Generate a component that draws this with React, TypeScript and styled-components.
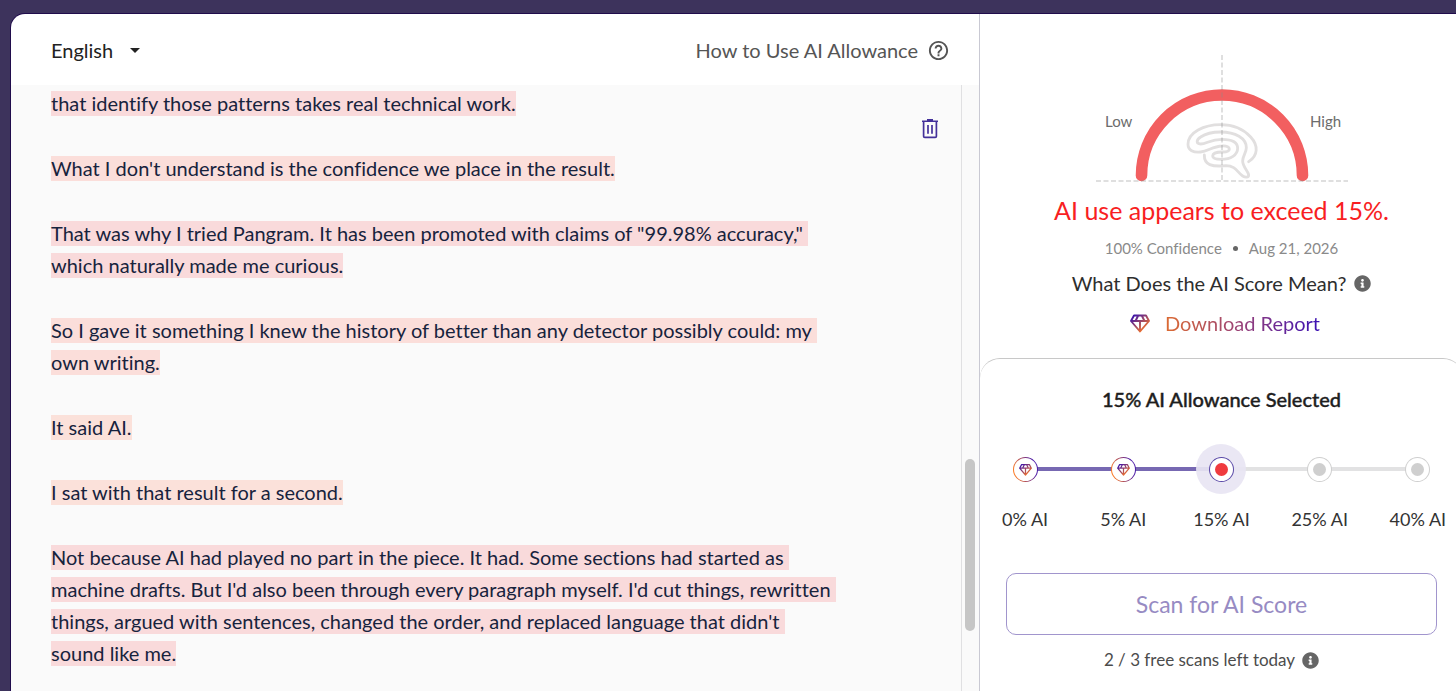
import React from "react";
import styled, { createGlobalStyle } from "styled-components";
import { FaInfoCircle } from "react-icons/fa";
import { MdHelpOutline } from "react-icons/md";

const GlobalStyle = createGlobalStyle`
  *, *::before, *::after { box-sizing: border-box; }
  body {
    margin: 0;
    background: #3d335c;
    color: #2b2b2b;
    font-family: Lato, "Liberation Sans", sans-serif;
    font-size: 20px;
    font-variant-ligatures: none;
    line-height: 24px;
  }
  button, select, input { font: inherit; color: inherit; }
  h1, h2, p { margin: 0; font-weight: 400; }
`;

const Page = styled.div`
  display: flex;
  height: 100vh;
  padding: 14px 0 0 11px;
  overflow: hidden;
`;

const Card = styled.main`
  display: flex;
  flex: 1;
  min-width: 0;
  margin-right: -7px;
  background: #fff;
  border-top-left-radius: 14px;
  box-shadow: 0 0 0 1px #200c4c;
  overflow: hidden;
`;

const Editor = styled.section`
  display: flex;
  flex: 1;
  flex-direction: column;
  min-width: 0;
`;

const Toolbar = styled.header`
  display: flex;
  align-items: center;
  justify-content: space-between;
  height: 71px;
  flex: none;
  padding: 0 29px 0 40px;

  svg { margin-top: 2px; }
`;

const LanguagePicker = styled.label`
  display: flex;
  align-items: center;
  gap: 16px;
  color: #222;
`;

const LanguageSelect = styled.select`
  appearance: none;
  padding: 0;
  border: 0;
  background: transparent;
  line-height: 28px;
`;

const HelpLink = styled.a`
  display: flex;
  align-items: center;
  gap: 9px;
  color: #555;
  text-decoration: none;
`;

const EditorBody = styled.div`
  display: flex;
  flex: 1;
  min-height: 0;
  background: #fafafa;
`;

const Document = styled.article`
  display: flex;
  flex: 1;
  flex-direction: column;
  gap: 33px;
  min-width: 0;
  padding: 2px 0 0 40px;
  overflow: hidden;
  color: #17233d;
  line-height: 32px;
  white-space: nowrap;
`;

const Highlight = styled.mark<{ $tone: Tone }>`
  padding-bottom: 1px;
  color: inherit;
  background: ${({ $tone }) => tones[$tone]};
`;

const EditorTools = styled.div`
  flex: none;
  padding: 33px 22px 0 0;
`;

const IconButton = styled.button`
  display: flex;
  padding: 0;
  border: 0;
  background: transparent;
  color: #43309a;
`;

const ScrollTrack = styled.div`
  display: flex;
  flex: none;
  flex-direction: column;
  width: 18px;
  padding: 0 3px;
  border-left: 1px solid #e0e0e2;
  &::before { content: ""; flex: 374; }
  &::after { content: ""; flex: 60; }
`;

const ScrollThumb = styled.div`
  flex: 172;
  width: 10px;
  border-radius: 5px;
  background: #c6c6c6;
`;

const Results = styled.aside`
  display: flex;
  flex: none;
  flex-direction: column;
  width: 484px;
  border-left: 1px solid #c9c9d3;
`;

const Summary = styled.section`
  display: flex;
  flex-direction: column;
  align-items: center;
  padding: 41px 0 23px;
`;

const Verdict = styled.h1`
  margin-top: 12px;
  color: #f81e22;
  font-size: 25px;
  line-height: 32px;
`;

const Meta = styled.p`
  display: flex;
  align-items: center;
  gap: 11px;
  margin-top: 12px;
  color: #8a8a8a;
  font-size: 15px;
  line-height: 20px;
`;

const Dot = styled.span`
  width: 5px;
  height: 5px;
  border-radius: 50%;
  background: #666;
`;

const Question = styled.p`
  display: flex;
  align-items: center;
  gap: 8px;
  margin-top: 13px;
  color: #2e2e2e;
`;

const InfoIcon = styled(FaInfoCircle)`
  width: 17px;
  height: 17px;
  color: #666;
`;

const DownloadLink = styled.a`
  display: flex;
  align-items: center;
  gap: 15px;
  margin-top: 16px;
  padding-left: 7px;
  text-decoration: none;
`;

const GradientText = styled.span`
  background: linear-gradient(90deg, #dc6b32, #97407a 50%, #3a10b4);
  background-clip: text;
  color: transparent;
`;

const Allowance = styled.section`
  display: flex;
  flex: 1;
  flex-direction: column;
  padding: 28px 26px 0;
  border-top: 1px solid #c8c8c8;
  border-radius: 20px 20px 0 0;
`;

const AllowanceTitle = styled.h2`
  color: #1e1e1e;
  font-size: 20px;
  font-weight: 500;
  text-align: center;
  -webkit-text-stroke: 0.4px currentColor;
`;

const Stops = styled.fieldset`
  display: grid;
  grid-template-columns: repeat(5, 1fr);
  min-width: 0;
  margin: 33px -30px 0;
  padding: 0;
  border: 0;
`;

const Stop = styled.label<{ $line: "none" | "passed" | "ahead" }>`
  position: relative;
  display: flex;
  flex-direction: column;
  align-items: center;
  gap: 13px;
  font-size: 18px;
  color: #333;
  &::before {
    content: "";
    position: absolute;
    top: 23px;
    right: 50%;
    width: 100%;
    height: 4px;
    background: ${({ $line }) =>
      $line === "none" ? "transparent" : $line === "passed" ? "#7768b2" : "#e2e2e3"};
  }
`;

const StopInput = styled.input`
  position: absolute;
  margin: 0;
  opacity: 0;
`;

const Halo = styled.span<{ $active: boolean }>`
  position: relative;
  z-index: 1;
  display: grid;
  place-items: center;
  width: 50px;
  height: 50px;
  border-radius: 50%;
  background: ${({ $active }) => ($active ? "rgba(232, 229, 243, 0.92)" : "transparent")};
`;

const knobFill = {
  premium: "linear-gradient(#fff, #fff) padding-box, linear-gradient(75deg, #ff7a1f 10%, #4d1ca8 80%) border-box",
  active: "linear-gradient(#fff, #fff) padding-box, linear-gradient(#5b4aa8, #5b4aa8) border-box",
  idle: "linear-gradient(#fff, #fff) padding-box, linear-gradient(#cfcfcf, #cfcfcf) border-box",
};

const Knob = styled.span<{ $kind: keyof typeof knobFill }>`
  display: grid;
  place-items: center;
  width: 25px;
  height: 25px;
  border: 1px solid transparent;
  border-radius: 50%;
  background: ${({ $kind }) => knobFill[$kind]};
`;

const KnobCore = styled.span<{ $active: boolean }>`
  width: 13px;
  height: 13px;
  border-radius: 50%;
  background: ${({ $active }) => ($active ? "#ef3b3f" : "#cfcfcf")};
`;

const ScanButton = styled.button`
  height: 62px;
  margin-top: 42px;
  border: 1px solid #a195cd;
  border-radius: 10px;
  background: #fff;
  color: #978bc3;
  font-size: 23px;
`;

const Quota = styled.p`
  display: flex;
  align-items: center;
  justify-content: center;
  gap: 7px;
  margin-top: 15px;
  padding-right: 20px;
  color: #4c4c4c;
  font-size: 17px;
  line-height: 20px;
`;

const tones = { strong: "#f9dadb", medium: "#fbdeda", light: "#fbe1da" };
type Tone = keyof typeof tones;

const paragraphs: { tone: Tone; lines: string[] }[] = [
  { tone: "strong", lines: ["that identify those patterns takes real technical work."] },
  { tone: "medium", lines: ["What I don't understand is the confidence we place in the result."] },
  {
    tone: "strong",
    lines: [
      'That was why I tried Pangram. It has been promoted with claims of "99.98% accuracy,"',
      "which naturally made me curious.",
    ],
  },
  {
    tone: "medium",
    lines: [
      "So I gave it something I knew the history of better than any detector possibly could: my",
      "own writing.",
    ],
  },
  { tone: "light", lines: ["It said AI."] },
  { tone: "light", lines: ["I sat with that result for a second."] },
  {
    tone: "strong",
    lines: [
      "Not because AI had played no part in the piece. It had. Some sections had started as",
      "machine drafts. But I'd also been through every paragraph myself. I'd cut things, rewritten",
      "things, argued with sentences, changed the order, and replaced language that didn't",
      "sound like me.",
    ],
  },
];

const stops = ["0% AI", "5% AI", "15% AI", "25% AI", "40% AI"];
const selected = 2;

const Gem = ({ size, id }: { size: number; id: string }) => (
  <svg width={size} height={size} viewBox="0 0 20 20" fill="none" aria-hidden="true">
    <defs>
      <linearGradient id={id} x1="4" y1="3" x2="15" y2="16" gradientUnits="userSpaceOnUse">
        <stop stopColor="#4217a6" />
        <stop offset="1" stopColor="#f0722c" />
      </linearGradient>
    </defs>
    <path
      d="M4 2.5H16L19 8L10 18.500L1 8ZM1.5 8H18.5M8 3L5.500 8M12 3L14.500 8M10 8V18"
      stroke={`url(#${id})`}
      strokeWidth="1.9"
      strokeLinejoin="round"
    />
  </svg>
);

const Trash = () => (
  <svg width="18" height="22" viewBox="0 0 18 22" fill="none" stroke="currentColor" aria-hidden="true">
    <path d="M1 3.2H17M6 1.8H12" strokeWidth="1.6" />
    <path d="M2.6 3.5V18.2Q2.6 19.4 3.8 19.4H14.2Q15.4 19.4 15.4 18.2V3.5" strokeWidth="1.7" />
    <path d="M7 7V15.8M11 7V15.8" strokeWidth="1.7" />
  </svg>
);

const Gauge = () => (
  <svg width="252" height="127" viewBox="0 0 252 127" fill="none" role="img" aria-label="AI score gauge">
    <g transform="translate(84 60) scale(0.3333)">
      <path
        d="M206 140C234 122 236 92 212 66C190 42 160 29 122 29C72 29 24 52 24 88C24 106 40 113 62 111C84 109 98 94 126 93C142 92 148 97 148 102C148 109 140 111 128 111C110 111 98 115 98 123C98 130 108 133 124 133C152 133 173 120 173 100C173 82 156 73 126 73C90 73 80 87 62 87C48 87 48 75 62 66C78 55 98 51 122 51C166 51 199 70 199 98C199 114 188 122 188 138C188 156 206 170 206 180C206 188 196 188 188 183C172 173 168 152 138 152C96 156 72 150 73 120"
        stroke="#e1dfdf"
        strokeWidth="8.5"
        strokeLinecap="round"
        strokeLinejoin="round"
      />
    </g>
    <path d="M45.5 120.5A80.5 80.5 0 0 1 206.500 120.500" stroke="#f25f60" strokeWidth="11.6" strokeLinecap="round" />
    <path d="M126 0V126M0 126H252" stroke="#8c8c8c" strokeOpacity=".55" strokeDasharray="5 2.500" />
    <text x="9" y="72" fill="#6c6c6c" fontSize="15">Low</text>
    <text x="214" y="72" fill="#6c6c6c" fontSize="15">High</text>
  </svg>
);

export default function App() {
  return (
    <>
      <GlobalStyle />
      <Page>
        <Card>
          <Editor>
            <Toolbar>
              <LanguagePicker>
                <LanguageSelect aria-label="Language" defaultValue="English">
                  <option>English</option>
                </LanguageSelect>
                <svg width="10" height="5" viewBox="0 0 10 5" aria-hidden="true">
                  <path d="M0 0H10L5 5Z" fill="#222" />
                </svg>
              </LanguagePicker>
              <HelpLink href="#help">
                How to Use AI Allowance
                <MdHelpOutline size={23} />
              </HelpLink>
            </Toolbar>
            <EditorBody>
              <Document>
                {paragraphs.map(({ tone, lines }) => (
                  <p key={lines[0]}>
                    {lines.map((line, i) => (
                      <React.Fragment key={line}>
                        {i > 0 && <br />}
                        <Highlight $tone={tone}>
                          {line}
                          {i < lines.length - 1 && "\u00a0"}
                        </Highlight>
                      </React.Fragment>
                    ))}
                  </p>
                ))}
              </Document>
              <EditorTools>
                <IconButton type="button" aria-label="Delete text">
                  <Trash />
                </IconButton>
              </EditorTools>
              <ScrollTrack>
                <ScrollThumb />
              </ScrollTrack>
            </EditorBody>
          </Editor>

          <Results>
            <Summary>
              <Gauge />
              <Verdict>AI use appears to exceed 15%.</Verdict>
              <Meta>
                <span>100% Confidence</span>
                <Dot />
                <span>Aug 21, 2026</span>
              </Meta>
              <Question>
                What Does the AI Score Mean?
                <InfoIcon />
              </Question>
              <DownloadLink href="#report">
                <Gem size={20} id="gem-report" />
                <GradientText>Download Report</GradientText>
              </DownloadLink>
            </Summary>

            <Allowance>
              <AllowanceTitle>15% AI Allowance Selected</AllowanceTitle>
              <Stops aria-label="AI allowance">
                {stops.map((label, i) => (
                  <Stop key={label} $line={i === 0 ? "none" : i <= selected ? "passed" : "ahead"}>
                    <StopInput type="radio" name="allowance" defaultChecked={i === selected} />
                    <Halo $active={i === selected}>
                      <Knob $kind={i < selected ? "premium" : i === selected ? "active" : "idle"}>
                        {i < selected ? (
                          <Gem size={13} id={`gem-${i}`} />
                        ) : (
                          <KnobCore $active={i === selected} />
                        )}
                      </Knob>
                    </Halo>
                    {label}
                  </Stop>
                ))}
              </Stops>
              <ScanButton type="button">Scan for AI Score</ScanButton>
              <Quota>
                2 / 3 free scans left today
                <InfoIcon />
              </Quota>
            </Allowance>
          </Results>
        </Card>
      </Page>
    </>
  );
}
